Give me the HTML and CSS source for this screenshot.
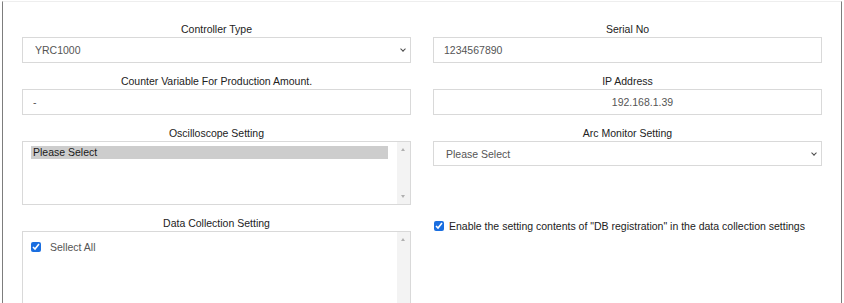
FILE: index.html
```html
<!DOCTYPE html>
<html lang="en">
<head>
    <meta charset="UTF-8">
    <meta name="viewport" content="width=device-width, initial-scale=1.0">
    <title>Controller Settings</title>
    <link rel="stylesheet" href="styles.css">
</head>
<body>

    <div class="panel">
        <div class="form-grid">
            <div class="field">
                <label class="field-label">Controller Type</label>
                <div class="select-wrap">
                    <select class="control">
                        <option>YRC1000</option>
                    </select>
                </div>
            </div>
            <div class="field">
                <label class="field-label">Serial No</label>
                <input type="text" class="control" value="1234567890">
            </div>

            <div class="field">
                <label class="field-label">Counter Variable For Production Amount.</label>
                <input type="text" class="control" value="-">
            </div>
            <div class="field">
                <label class="field-label">IP Address</label>
                <input type="text" class="control ip-input" value="192.168.1.39">
            </div>

            <div class="field">
                <label class="field-label">Oscilloscope Setting</label>
                <div class="listbox scope-list">
                    <div class="listbox-items">
                        <div class="listbox-item selected">Please Select</div>
                    </div>
                    <div class="scrollbar">
                        <span class="arrow arrow-up"></span>
                        <span class="arrow arrow-down"></span>
                    </div>
                </div>
            </div>
            <div class="field">
                <label class="field-label">Arc Monitor Setting</label>
                <div class="select-wrap">
                    <select class="control arc-select">
                        <option>Please Select</option>
                    </select>
                </div>
            </div>

            <div class="field">
                <label class="field-label">Data Collection Setting</label>
                <div class="listbox collect-list">
                    <div class="listbox-items">
                        <label class="check-item">
                            <input type="checkbox" checked>
                            <span>Sellect All</span>
                        </label>
                    </div>
                    <div class="scrollbar">
                        <span class="arrow arrow-up"></span>
                    </div>
                </div>
            </div>
            <div class="field db-option">
                <label class="check-line">
                    <input type="checkbox" checked>
                    <span>Enable the setting contents of "DB registration" in the data collection settings</span>
                </label>
            </div>
        </div>
    </div>

</body>
</html>
```

FILE: styles.css
```css
:root {
    --text-color: #222222;
    --value-color: #555555;
    --border-color: #d9d9d9;
    --frame-color: #7d7d7d;
    --check-color: #1a6ee0;
}

* {
    box-sizing: border-box;
}

body {
    margin: 0;
    padding: 0;
    background-color: #ffffff;
    font-family: 'Liberation Sans', Arial, sans-serif;
    font-size: 10.5px;
    color: var(--text-color);
    overflow: hidden;
}

.panel {
    margin: 1px 0 0 2px;
    width: 840px;
    min-height: 320px;
    border-top: 1px solid #eeeeee;
    border-left: 1px solid var(--frame-color);
    border-right: 1px solid var(--frame-color);
    padding: 20px 19px 0 19px;
}

.form-grid {
    display: grid;
    grid-template-columns: 389px 389px;
    column-gap: 22px;
    row-gap: 11px;
}

.field-label {
    display: block;
    text-align: center;
    line-height: 14px;
    margin-bottom: 1px;
}

.control {
    display: block;
    width: 100%;
    height: 26px;
    margin: 0;
    padding: 0 10px;
    border: 1px solid var(--border-color);
    border-radius: 0;
    background-color: #ffffff;
    font-family: inherit;
    font-size: 10.5px;
    color: var(--value-color);
    outline: none;
}

select.control {
    appearance: none;
    -webkit-appearance: none;
    padding-left: 12px;
}

.arc-select {
    height: 25px;
}

.select-wrap {
    position: relative;
}

/* small chevron of the drop-down */
.select-wrap::after {
    content: '';
    position: absolute;
    right: 6px;
    top: 50%;
    width: 3px;
    height: 3px;
    border-right: 1.5px solid #4a4a4a;
    border-bottom: 1.5px solid #4a4a4a;
    transform: translateY(-75%) rotate(45deg);
    pointer-events: none;
}

.ip-input {
    text-align: center;
    padding-left: 40px;
}

/* list boxes with a fake scrollbar */
.listbox {
    display: flex;
    border: 1px solid var(--border-color);
    background-color: #ffffff;
}

.scope-list {
    height: 64px;
}

.collect-list {
    height: 100px;
}

.listbox-items {
    flex-grow: 1;
    padding: 4px 9px 0 8px;
}

.listbox-item {
    line-height: 13px;
    padding-left: 2px;
}

.listbox-item.selected {
    background-color: #cdcdcd;
    color: #1a1a1a;
}

.scrollbar {
    width: 13px;
    background-color: #f3f3f3;
    position: relative;
}

.arrow {
    position: absolute;
    left: 4px;
    width: 0;
    height: 0;
    border-left: 2.5px solid transparent;
    border-right: 2.5px solid transparent;
}

.arrow-up {
    top: 6px;
    border-bottom: 3px solid #b0b0b0;
}

.arrow-down {
    bottom: 6px;
    border-top: 3px solid #b0b0b0;
}

.check-item {
    display: flex;
    align-items: center;
    gap: 9px;
    margin-top: 5px;
    color: var(--value-color);
}

.check-item input,
.check-line input {
    width: 10px;
    height: 10px;
    margin: 0;
    accent-color: var(--check-color);
}

.db-option {
    padding-top: 3px;
}

.check-line {
    display: flex;
    align-items: center;
    gap: 5px;
    margin-left: 1px;
    line-height: 14px;
}
```
